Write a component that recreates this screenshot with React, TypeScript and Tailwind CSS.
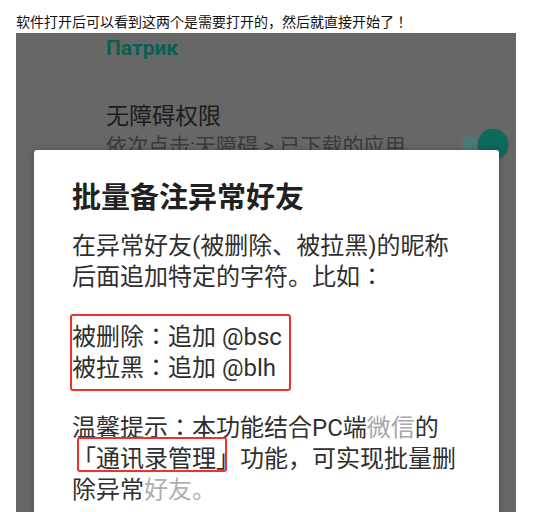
import React from "react";

const cjk = "font-['Roboto','Noto_Sans_CJK_JP',sans-serif]";

function Toggle() {
  return (
    <div className="flex items-center">
      <div className="h-[14px] w-[34px] rounded-full bg-[#4c7a71]" />
      <div className="-ml-[17px] h-[30px] w-[30px] rounded-full bg-[#0b6a5b] shadow-[0_1px_3px_rgba(0,0,0,0.35)]" />
    </div>
  );
}

function Marked({ children }: { children: React.ReactNode }) {
  return (
    <span className="relative inline-block">
      {children}
      <span className="absolute left-[5px] top-[-7px] h-[35px] w-[150px] rounded-[3px] border-2 border-[#f4302a]" />
    </span>
  );
}

export default function App() {
  return (
    <div className="h-[512px] w-[553px] overflow-hidden bg-white">
      <p
        className={`mt-[12px] pl-[16px] text-[14px] leading-[21px] text-[#111] ${cjk}`}
      >
        软件打开后可以看到这两个是需要打开的，然后就直接开始了！
      </p>

      <div className={`relative ml-[16px] h-[479px] w-[500px] overflow-hidden bg-[#676767] ${cjk}`}>
        <div className="flex flex-col pl-[90px] pr-[8px] pt-[3px]">
          <p className="text-[21px] font-bold leading-[24px] text-[#0b5f51]">Патрик</p>
          <div className="mt-[43px] flex items-end justify-between pb-[1px]">
            <div>
              <p className="text-[23px] leading-[28px] text-[#1c1c1c]">无障碍权限</p>
              <p className="mt-[2px] text-[21px] leading-[26px] text-[#3a3a3a]">
                依次点击:无障碍 &gt; 已下载的应用
              </p>
            </div>
            <Toggle />
          </div>
        </div>

        <div className="absolute left-[18px] top-[117px] h-[400px] w-[465px] rounded-[3px] bg-white pl-[38px] pt-[30px] shadow-[0_0_6px_rgba(0,0,0,0.25)]">
          <h2 className="whitespace-nowrap text-[29px] font-bold leading-[36px] text-[#212121]">
            批量备注异常好友
          </h2>

          <p className="mt-[15px] whitespace-nowrap text-[24px] leading-[31px] text-[#2f2f2f]">
            在异常好友(被删除、被拉黑)的昵称
            <br />
            后面追加特定的字符。比如：
          </p>

          <div className="-ml-[2px] mt-[21px] w-[221px] whitespace-nowrap rounded-[3px] border-2 border-[#f4302a] pb-[5px] pt-[6px] text-[24px] leading-[31px] text-[#2f2f2f]">
            <p>被删除：追加 @bsc</p>
            <p>被拉黑：追加 @blh</p>
          </div>

          <p className="mt-[22px] whitespace-nowrap text-[24px] leading-[31px] text-[#2f2f2f]">
            温馨提示：本功能结合PC端<span className="text-[#a8a8a8]">微信</span>的
            <br />
            <Marked>「通讯录管理」</Marked>功能，可实现批量删
            <br />
            除异常<span className="text-[#b0b0b0]">好友。</span>
          </p>
        </div>
      </div>
    </div>
  );
}
